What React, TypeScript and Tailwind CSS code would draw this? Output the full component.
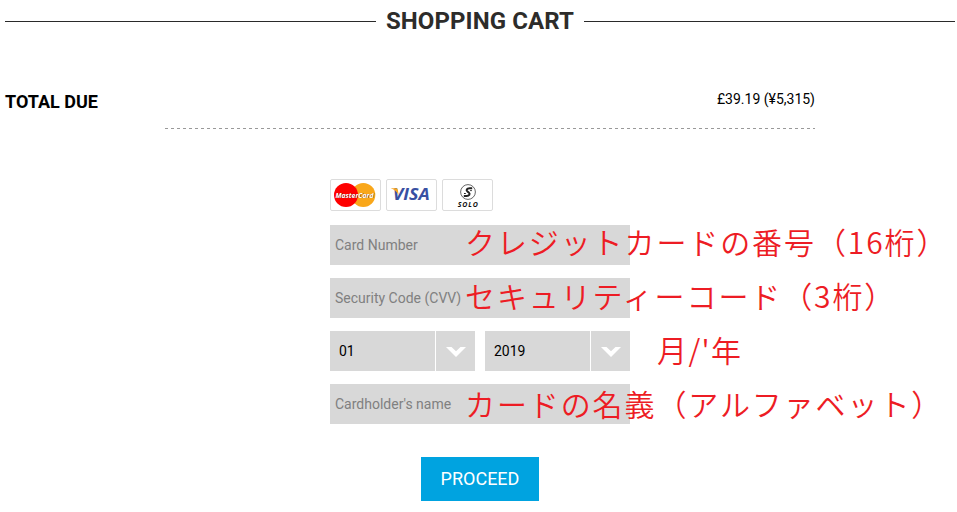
import React from "react";

function MasterCard() {
  return (
    <svg width="51" height="32" viewBox="0 0 51 32">
      <rect x="0.5" y="0.5" width="50" height="31" rx="1.5" fill="#fff" stroke="#dcdcdc" />
      <circle cx="33.3" cy="16" r="12" fill="#f9a71a" />
      <circle cx="16" cy="16" r="12" fill="#fe0000" />
      <text x="6.2" y="19.4" textLength="38" lengthAdjust="spacingAndGlyphs" fontFamily="'Open Sans', sans-serif" fontSize="7.8" fontWeight="700" fontStyle="italic" fill="#5a1a00" opacity="0.75">MasterCard</text>
      <text x="5.5" y="18.8" textLength="38" lengthAdjust="spacingAndGlyphs" fontFamily="'Open Sans', sans-serif" fontSize="7.8" fontWeight="700" fontStyle="italic" fill="#fff">MasterCard</text>
    </svg>
  );
}

function Visa() {
  return (
    <svg width="51" height="32" viewBox="0 0 51 32">
      <rect x="0.5" y="0.5" width="50" height="31" rx="1.5" fill="#fff" stroke="#dcdcdc" />
      <text x="6.8" y="21.2" textLength="37" lengthAdjust="spacingAndGlyphs" fontFamily="'Open Sans', sans-serif" fontSize="16.5" fontWeight="700" fontStyle="italic" fill="#3850a2">VISA</text>
      <path d="M4.6 9.3 H10 C11.2 9.3 11.7 10 11.9 10.9 L12.6 16 C11 12.8 8 10.5 4.6 9.3 Z" fill="#f7a623" />
    </svg>
  );
}

function Solo() {
  return (
    <svg width="51" height="32" viewBox="0 0 51 32">
      <rect x="0.5" y="0.5" width="50" height="31" rx="1.5" fill="#fff" stroke="#dcdcdc" />
      <circle cx="26" cy="13" r="7.4" fill="#fff" stroke="#555" strokeWidth="0.9" />
      <path d="M30.2 9.2 H27.6 C24.6 9.2 23.8 11.4 25.6 12.6 L26.8 13.5 C28.4 14.8 27.4 17 24.6 17 H21.8" fill="none" stroke="#222" strokeWidth="2" />
      <path d="M29.8 11.6 H28.2 M23.8 14.5 H22" fill="none" stroke="#222" strokeWidth="1" />
      <text x="15.8" y="27.6" textLength="20" lengthAdjust="spacing" fontFamily="'Open Sans', sans-serif" fontSize="7" fontWeight="700" fontStyle="italic" fill="#111">SOLO</text>
    </svg>
  );
}

function Field({ label }: { label: string }) {
  return (
    <input
      placeholder={label}
      aria-label={label}
      className="block h-10 w-[300px] bg-[#d8d8d8] px-[5px] text-sm outline-none placeholder:text-[#808080] placeholder:opacity-100"
    />
  );
}

function Picker({ value }: { value: string }) {
  return (
    <button type="button" className="flex h-10 w-[145px] gap-px text-left text-sm">
      <span className="flex h-10 w-[105px] items-center bg-[#d8d8d8] pl-[9px]">{value}</span>
      <span className="flex h-10 w-[39px] items-center justify-center bg-[#d8d8d8]">
        <svg width="20" height="10" viewBox="0 0 20 10" className="mt-px">
          <path d="M0 0 H5.5 L10 4.3 L14.5 0 H20 L10 10 Z" fill="#fff" />
        </svg>
      </span>
    </button>
  );
}

function Note({ className, children }: { className: string; children: React.ReactNode }) {
  return (
    <div
      className={
        "pointer-events-none absolute whitespace-nowrap font-['Noto_Sans_CJK_JP',sans-serif] text-[30px] leading-8 font-[350] text-[#ed1c24] " +
        className
      }
    >
      {children}
    </div>
  );
}

export default function App() {
  return (
    <main className="relative h-[512px] w-[957px] overflow-hidden bg-white font-[Roboto,sans-serif] text-black">
      <header className="flex h-[42px] items-center pr-[2px] pl-[5px]">
        <span className="h-px w-[371px] bg-[#2a2a2a]" />
        <h1 className="w-[208px] text-center text-2xl leading-[42px] font-bold tracking-[0.1px] whitespace-nowrap text-[#2d2c2a]">SHOPPING CART</h1>
        <span className="h-px flex-1 bg-[#2a2a2a]" />
      </header>

      <section className="flex h-[86px] justify-between pt-[46px] pr-[142px] pl-[5px]">
        <h2 className="pt-[2px] text-lg leading-6 font-bold">TOTAL DUE</h2>
        <p className="text-sm leading-[22px]">£39.19 (¥5,315)</p>
      </section>
      <div className="ml-[165px] h-px w-[650px] bg-[repeating-linear-gradient(90deg,#999_0_3px,transparent_3px_6px)]" />

      <form className="ml-[330px] flex w-[300px] flex-col pt-[50px]">
        <div className="flex gap-[5px]">
          <MasterCard />
          <Visa />
          <Solo />
        </div>
        <div className="mt-[14px] flex flex-col gap-[13px]">
          <Field label="Card Number" />
          <Field label="Security Code (CVV)" />
          <div className="flex gap-[10px]">
            <Picker value="01" />
            <Picker value="2019" />
          </div>
          <Field label="Cardholder's name" />
        </div>
        <button type="button" className="mt-[33px] ml-[91px] h-11 w-[118px] bg-[#00a3e0] text-lg whitespace-nowrap text-white">
          PROCEED
        </button>
      </form>

      <Note className="top-[225px] left-[465px] tracking-[1.9px]">クレジットカードの番号（16桁）</Note>
      <Note className="top-[279px] left-[465px] tracking-[1.9px]">セキュリティーコード（3桁）</Note>
      <Note className="top-[333px] left-[657px] tracking-[1.4px]">月/'年</Note>
      <Note className="top-[387px] left-[465px] tracking-[1.9px]">カードの名義（アルファベット）</Note>
    </main>
  );
}
